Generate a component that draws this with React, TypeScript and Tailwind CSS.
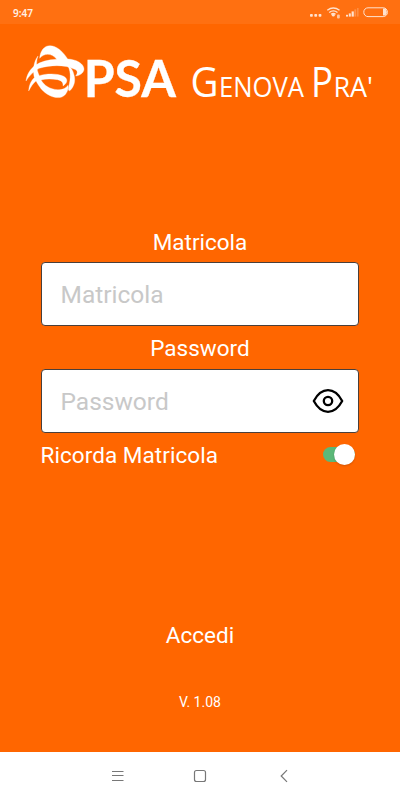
import React from "react";

function StatusBar() {
  return (
    <header className="flex h-6 items-center bg-[#ff7011] pl-[13px] text-[#fff0e5]">
      <span className="w-[24px] whitespace-nowrap pt-px font-['Noto_Sans'] text-[10px] leading-6 font-semibold">9:47</span>
      <svg className="ml-auto" width="110" height="24" viewBox="0 0 110 24" fill="none">
        <g fill="#ffe2cf">
          <rect x="20" y="14" width="2.8" height="2.8" rx="0.8" />
          <rect x="24.3" y="14" width="2.8" height="2.8" rx="0.8" />
          <rect x="28.6" y="14" width="2.8" height="2.8" rx="0.8" />
          <circle cx="43.3" cy="15.2" r="1.4" />
          <rect x="47" y="14.6" width="2.8" height="3.8" rx="1" opacity="0.75" />
          <rect x="56" y="14.8" width="2" height="1.8" />
          <rect x="58.8" y="13.4" width="2" height="3.2" />
          <rect x="61.6" y="11.4" width="2.2" height="5.2" />
          <rect x="64.4" y="9.4" width="1.8" height="7.2" opacity="0.3" />
          <rect x="67" y="8" width="1.6" height="8.6" opacity="0.25" />
          <path d="M93 8.6h2.2q1.6 1 1.6 3.7t-1.6 3.1H93z" />
        </g>
        <g stroke="#ffe2cf" strokeWidth="1.4">
          <path d="M37.3 10.3Q43.3 5.7 49.5 10.3M39.2 12.5Q43.3 9.2 47.5 12.5M41.2 14.4Q43.3 12.6 45.5 14.4" />
          <rect x="73.8" y="7.8" width="23.6" height="8.8" rx="4.2" strokeWidth="1" />
        </g>
      </svg>
    </header>
  );
}

function Brand() {
  return (
    <svg className="block" width="400" height="86" viewBox="0 24 400 86" fill="#fff" role="img" aria-label="PSA Genova Pra'">
      <g transform="scale(.33333)" stroke="#fff" strokeWidth="1" strokeLinejoin="round">
        <path d="M119 175C121 151 133 137 150 137C170 138 188 153 203 177C228 178 251 190 252 207C252 218 240 227 227 228C234 219 234 211 222 207C196 194 151 194 118 205C101 213 87 229 78 243C80 225 90 207 106 196C122 185 143 179 170 178C163 168 153 163 143 163C134 163 126 167 119 175Z" />
        <path d="M114 168C107 187 109 207 118 227C140 220 173 220 191 229C205 237 203 249 189 258C190 247 185 242 173 239C154 236 138 236 123 240C133 257 150 268 173 269C187 270 197 266 204 256C206 272 198 287 183 292C163 296 140 286 123 266C117 258 112 251 108 243C99 250 93 260 86 273C87 254 94 241 103 233C98 211 101 184 114 168Z" />
        <path d="M200 192C213 209 213 235 206 260C204 269 206 275 211 271C223 258 227 242 222 225C219 211 213 201 200 192Z" />
      </g>
      <text x="83.7" y="96.8" className="font-['Lato'] font-bold" fontSize="51" textLength="92.3" lengthAdjust="spacingAndGlyphs" stroke="#fff" strokeWidth="0.3">PSA</text>
      <g className="font-['Open_Sans']">
        <text x="190.5" y="97" fontSize="41.5" textLength="28" lengthAdjust="spacingAndGlyphs">G</text>
        <text x="219" y="97" fontSize="28" textLength="85" lengthAdjust="spacingAndGlyphs">ENOVA</text>
        <text x="311" y="97" fontSize="41.5" textLength="22" lengthAdjust="spacingAndGlyphs">P</text>
        <text x="333.5" y="97" fontSize="28" textLength="39.5" lengthAdjust="spacingAndGlyphs">RA'</text>
      </g>
    </svg>
  );
}

function Eye() {
  return (
    <svg className="mb-px shrink-0" width="32" height="26" viewBox="0 0 32 26" fill="none" stroke="#000" strokeWidth="2.3" strokeLinejoin="round">
      <path d="M1.8 13C5 7 10.2 2.2 16 2.2S27 7 30.2 13C27 19 21.8 23.8 16 23.8S5 19 1.8 13Z" />
      <circle cx="16" cy="13" r="4.2" />
    </svg>
  );
}

function Field({ label, type, labelClass, children }: { label: string; type: string; labelClass: string; children?: React.ReactNode }) {
  return (
    <label className="block">
      <span className={`block h-10 text-center text-[22.5px] ${labelClass}`}>{label}</span>
      <span className="flex h-16 items-center rounded-[4px] border border-[#4a3f3b] bg-white pr-[14px] pl-[18.5px]">
        <input type={type} placeholder={label} className="h-full w-full min-w-0 bg-transparent text-[24.5px] text-black outline-none placeholder:text-[#c8c8c8]" />
        {children}
      </span>
    </label>
  );
}

export default function App() {
  return (
    <div className="flex h-[800px] w-[400px] flex-col overflow-hidden bg-[#ff6600] font-['Roboto',sans-serif] text-white">
      <StatusBar />
      <Brand />
      <main className="flex flex-1 flex-col px-[41px] pt-[112px]">
        <div className="flex flex-col gap-[3px]">
          <Field label="Matricola" type="text" labelClass="leading-[41px]" />
          <Field label="Password" type="password" labelClass="leading-[39px]">
            <Eye />
          </Field>
        </div>
        <div className="flex h-11 items-center justify-between text-[22.5px]">
          <span className="-ml-[0.5px] pt-px tracking-[0.06px]">Ricorda Matricola</span>
          <span role="switch" aria-checked="true" className="mr-1 mb-[2px] flex h-[15px] w-[32px] items-center justify-end rounded-full bg-[#5bb878]">
            <span className="h-[21px] w-[21px] shrink-0 rounded-full bg-white shadow-[0_1px_2px_rgba(0,0,0,0.18)]" />
          </span>
        </div>
        <button className="mt-[138px] h-10 text-[22.5px] leading-10">Accedi</button>
        <p className="mt-[37px] text-center text-[14px] leading-5">V. 1.08</p>
      </main>
      <nav className="flex h-12 shrink-0 items-center justify-center bg-white text-[#777]">
        <svg width="200" height="48" viewBox="0 0 200 48" fill="none" stroke="currentColor" strokeWidth="1">
          <path d="M12 19.5h11.5M12 23.5h11.5M12 28.5h11.5" />
          <rect x="94.5" y="18.5" width="11" height="11" rx="2" strokeWidth="1.2" />
          <path d="M187 18.2l-5.8 5.8 5.8 5.8" strokeWidth="1.2" />
        </svg>
      </nav>
    </div>
  );
}
